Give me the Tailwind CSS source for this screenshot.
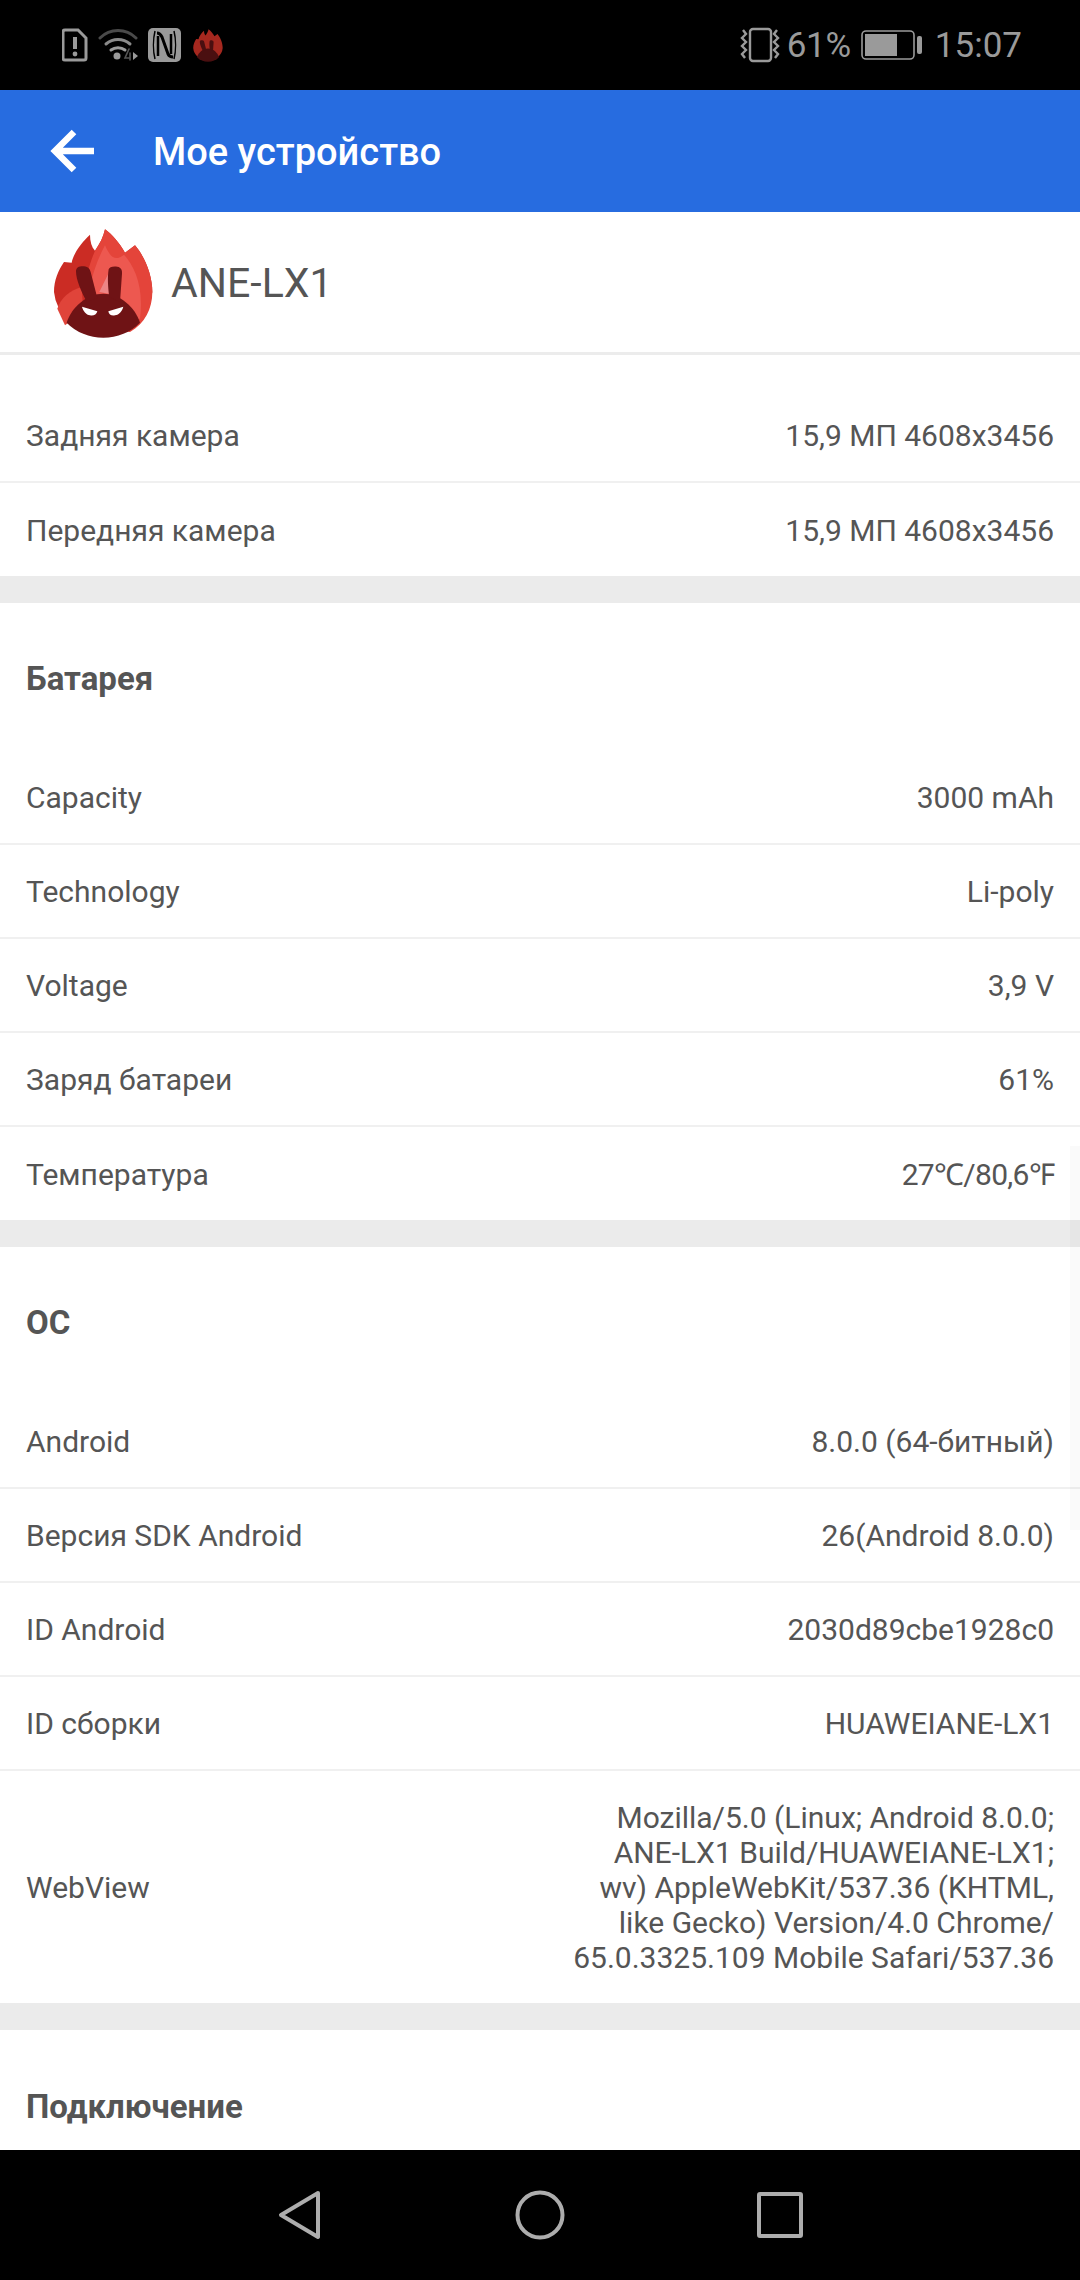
<!DOCTYPE html>
<html lang="ru">
<head>
  <meta charset="UTF-8" />
  <meta name="viewport" content="width=device-width, initial-scale=1.0"/>
  <title>Мое устройство</title>
  <script src="https://cdn.jsdelivr.net/npm/@tailwindcss/browser@4"></script>
</head>
<body class="bg-white font-['Roboto',sans-serif] text-[#555555]">
  <div class="relative w-[1080px] h-[2280px] flex flex-col overflow-hidden">
    <!-- status bar -->
    <div class="h-[90px] shrink-0 bg-black flex items-center justify-between pl-[62px] pr-[58px] text-[#9a9a9a]">
      <div class="flex items-center gap-[10px]">
        <svg width="26" height="34" viewBox="0 0 26 34"><path d="M3 2h13l8 8v20a2 2 0 0 1-2 2H3a2 2 0 0 1-2-2V4a2 2 0 0 1 2-2z" fill="none" stroke="#9a9a9a" stroke-width="3"/><path d="M13 9v12" stroke="#9a9a9a" stroke-width="4"/><circle cx="13" cy="26" r="2.4" fill="#9a9a9a"/></svg>
        <svg width="40" height="36" viewBox="0 0 40 36" fill="none" stroke-linecap="round"><path d="M2 11C12 1 28 1 38 11" stroke="#4a4a4a" stroke-width="3"/><path d="M8 17c7-6 17-6 24 0" stroke="#8a8a8a" stroke-width="3"/><path d="M13 23c4-3 10-3 14 0" stroke="#9a9a9a" stroke-width="3"/><circle cx="19" cy="29" r="3.5" fill="#9a9a9a"/><path d="M31 22l-4 9h5M32 26v7" stroke="#555" stroke-width="1.6"/><path d="M35 25l5 4-5 4z" fill="#9a9a9a"/></svg>
        <svg width="33" height="34" viewBox="0 0 33 34"><rect width="33" height="34" rx="5" fill="#9a9a9a"/><path d="M7 3c-2 8-2 20 0 28M26 3c2 8 2 20 0 28" fill="none" stroke="#000" stroke-width="1.5"/><path d="M9 5c3 0 4 2 5 4l6 17c1 2 2 3 5 3" fill="none" stroke="#000" stroke-width="3"/><path d="M10 8v20M23 6v20" stroke="#000" stroke-width="2.5"/></svg>
        <svg class="ml-[2px]" width="30" height="35" viewBox="40 50 300 330">
          <path d="M42 240C42 205 55 175 72 150L95 152C100 125 125 90 150 68C150 88 155 105 165 116C180 95 190 75 195 52C215 65 240 95 255 122L285 100C315 135 337 190 337 240A148 137 0 0 1 42 240Z" fill="#a5281f"/>
          <path d="M80 332C95 285 140 245 190 245C240 245 285 285 300 332A148 137 0 0 1 80 332Z" fill="#4a0f10"/>
          <path d="M108 178C108 165 120 162 132 163C145 164 150 172 152 180L172 258L140 270C125 240 108 205 108 178Z" fill="#4a0f10"/>
          <path d="M206 172C208 165 218 162 232 164C244 166 247 175 246 185L240 270L208 255C204 225 202 195 206 172Z" fill="#4a0f10"/>
        </svg>
      </div>
      <div class="flex items-center">
        <svg width="42" height="36" viewBox="0 0 42 36" fill="none" stroke="#9a9a9a" stroke-width="2.4"><rect x="11" y="2" width="21" height="32" rx="3"/><path d="M4 3l3 4-4 4 4 4-4 4 4 4-4 4 3 4M38 3l-3 4 4 4-4 4 4 4-4 4 4 4-3 4"/></svg>
        <span class="text-[35px] leading-none ml-[6px] tracking-[-0.3px]">61%</span>
        <svg class="ml-[10px]" width="62" height="30" viewBox="0 0 62 30"><rect x="1" y="1" width="52" height="28" rx="4" fill="none" stroke="#9a9a9a" stroke-width="1.6"/><rect x="4" y="4" width="32" height="22" fill="#9a9a9a"/><rect x="56" y="6" width="5" height="18" rx="2" fill="#9a9a9a"/></svg>
        <span class="text-[35px] leading-none ml-[12px]">15:07</span>
      </div>
    </div>

    <!-- app bar -->
    <div class="h-[122px] shrink-0 bg-[#276ce0] flex items-center pl-[50px]">
      <svg width="44" height="44" viewBox="0 0 44 44" fill="none" stroke="#fff" stroke-width="6.5"><path d="M44 22H5M24 3L5 22l19 19"/></svg>
      <span class="ml-[59px] mt-[3px] text-[38px] font-medium text-white">Мое устройство</span>
    </div>

    <!-- device header -->
    <div class="h-[143px] shrink-0 flex items-start pl-[40px] border-b-[3px] border-[#ececec]">
      <svg width="130" height="130" viewBox="0 0 390 390">
        <path d="M42 240C42 205 55 175 72 150L95 152C100 125 125 90 150 68C150 88 155 105 165 116C180 95 190 75 195 52C215 65 240 95 255 122L285 100C315 135 337 190 337 240A148 137 0 0 1 42 240Z" fill="#cb2c24"/>
        <path d="M52 290C62 258 90 235 125 225L130 300L75 340Z" fill="#e0443a"/>
        <path d="M150 340C125 270 130 200 165 116C180 95 190 75 195 52C215 65 240 95 255 122L285 100C315 135 337 190 337 240C337 290 315 335 270 360Z" fill="#e4443a"/>
        <path d="M150 340C135 270 150 185 195 100C210 135 225 150 252 128C285 165 312 225 300 320Z" fill="#ed5850"/>
        <path d="M178 240L205 185L232 250Z" fill="#ed8585"/>
        <path d="M80 332C95 285 140 245 190 245C240 245 285 285 300 332A148 137 0 0 1 80 332Z" fill="#6f1315"/>
        <path d="M108 178C108 165 120 162 132 163C145 164 150 172 152 180L172 258L140 270C125 240 108 205 108 178Z" fill="#6f1315"/>
        <path d="M206 172C208 165 218 162 232 164C244 166 247 175 246 185L240 270L208 255C204 225 202 195 206 172Z" fill="#6f1315"/>
        <path d="M126 284L172 298C170 308 160 312 150 310C138 308 130 298 126 284Z" fill="#fff"/>
        <path d="M250 284L205 298C206 308 215 312 225 310C238 308 246 298 250 284Z" fill="#fff"/>
      </svg>
      <span class="ml-[1px] mt-[47px] text-[41px] leading-[48px]">ANE-LX1</span>
    </div>

    <div class="flex-1 overflow-hidden text-[30px] leading-[35px]">
      <div class="pt-[34px] border-b-[27px] border-[#ebebeb]">
        <div class="h-[94px] flex items-center justify-between px-[26px] pt-[1px] border-b-2 border-[#f0f0f0]"><span>Задняя камера</span><span>15,9 МП 4608x3456</span></div>
        <div class="h-[93px] flex items-center justify-between px-[26px] pt-[1px]"><span>Передняя камера</span><span>15,9 МП 4608x3456</span></div>
      </div>

      <div class="h-[148px] flex items-center px-[26px] pt-[2px] font-bold text-[33px]">Батарея</div>
      <div class="border-b-[27px] border-[#ebebeb]">
        <div class="h-[94px] flex items-center justify-between px-[26px] pt-[1px] border-b-2 border-[#f0f0f0]"><span>Capacity</span><span>3000 mAh</span></div>
        <div class="h-[94px] flex items-center justify-between px-[26px] pt-[1px] border-b-2 border-[#f0f0f0]"><span>Technology</span><span>Li-poly</span></div>
        <div class="h-[94px] flex items-center justify-between px-[26px] pt-[1px] border-b-2 border-[#f0f0f0]"><span>Voltage</span><span>3,9 V</span></div>
        <div class="h-[94px] flex items-center justify-between px-[26px] pt-[1px] border-b-2 border-[#f0f0f0]"><span>Заряд батареи</span><span>61%</span></div>
        <div class="h-[93px] flex items-center justify-between px-[26px] pt-[1px]"><span>Температура</span><span class="tracking-[-0.7px]">27℃/80,6℉</span></div>
      </div>

      <div class="h-[148px] flex items-center px-[26px] pt-[2px] font-bold text-[33px]">ОС</div>
      <div class="border-b-[27px] border-[#ebebeb]">
        <div class="h-[94px] flex items-center justify-between px-[26px] pt-[1px] border-b-2 border-[#f0f0f0]"><span>Android</span><span>8.0.0 (64-битный)</span></div>
        <div class="h-[94px] flex items-center justify-between px-[26px] pt-[1px] border-b-2 border-[#f0f0f0]"><span>Версия SDK Android</span><span>26(Android 8.0.0)</span></div>
        <div class="h-[94px] flex items-center justify-between px-[26px] pt-[1px] border-b-2 border-[#f0f0f0]"><span>ID Android</span><span>2030d89cbe1928c0</span></div>
        <div class="h-[94px] flex items-center justify-between px-[26px] pt-[1px] border-b-2 border-[#f0f0f0]"><span>ID сборки</span><span>HUAWEIANE-LX1</span></div>
        <div class="h-[232px] flex items-center justify-between px-[26px]">
          <span>WebView</span>
          <span class="text-right">Mozilla/5.0 (Linux; Android 8.0.0;<br/>ANE-LX1 Build/HUAWEIANE-LX1;<br/>wv) AppleWebKit/537.36 (KHTML,<br/>like Gecko) Version/4.0 Chrome/<br/>65.0.3325.109 Mobile Safari/537.36</span>
        </div>
      </div>

      <div class="h-[148px] flex items-center px-[26px] pt-[4px] font-bold text-[33px]">Подключение</div>
    </div>

    <!-- nav bar -->
    <div class="h-[130px] shrink-0 bg-black flex items-start pt-[40px] pl-[278px]">
      <svg width="44" height="50" viewBox="0 0 44 50" fill="none" stroke="#adadad" stroke-width="4" stroke-linejoin="round"><path d="M40 3L3 25l37 22z"/></svg>
      <svg class="ml-[193px]" width="50" height="50" viewBox="0 0 50 50" fill="none" stroke="#adadad" stroke-width="4"><circle cx="25" cy="25" r="22.5"/></svg>
      <svg class="ml-[192px] mt-[2px]" width="46" height="46" viewBox="0 0 46 46" fill="none" stroke="#adadad" stroke-width="4" stroke-linejoin="round"><rect x="2" y="2" width="42" height="42" rx="1"/></svg>
    </div>

    <!-- scrollbar thumb -->
    <div class="absolute right-0 top-[1146px] w-[10px] h-[384px] bg-black/[0.02]"></div>
  </div>
</body>
</html>
